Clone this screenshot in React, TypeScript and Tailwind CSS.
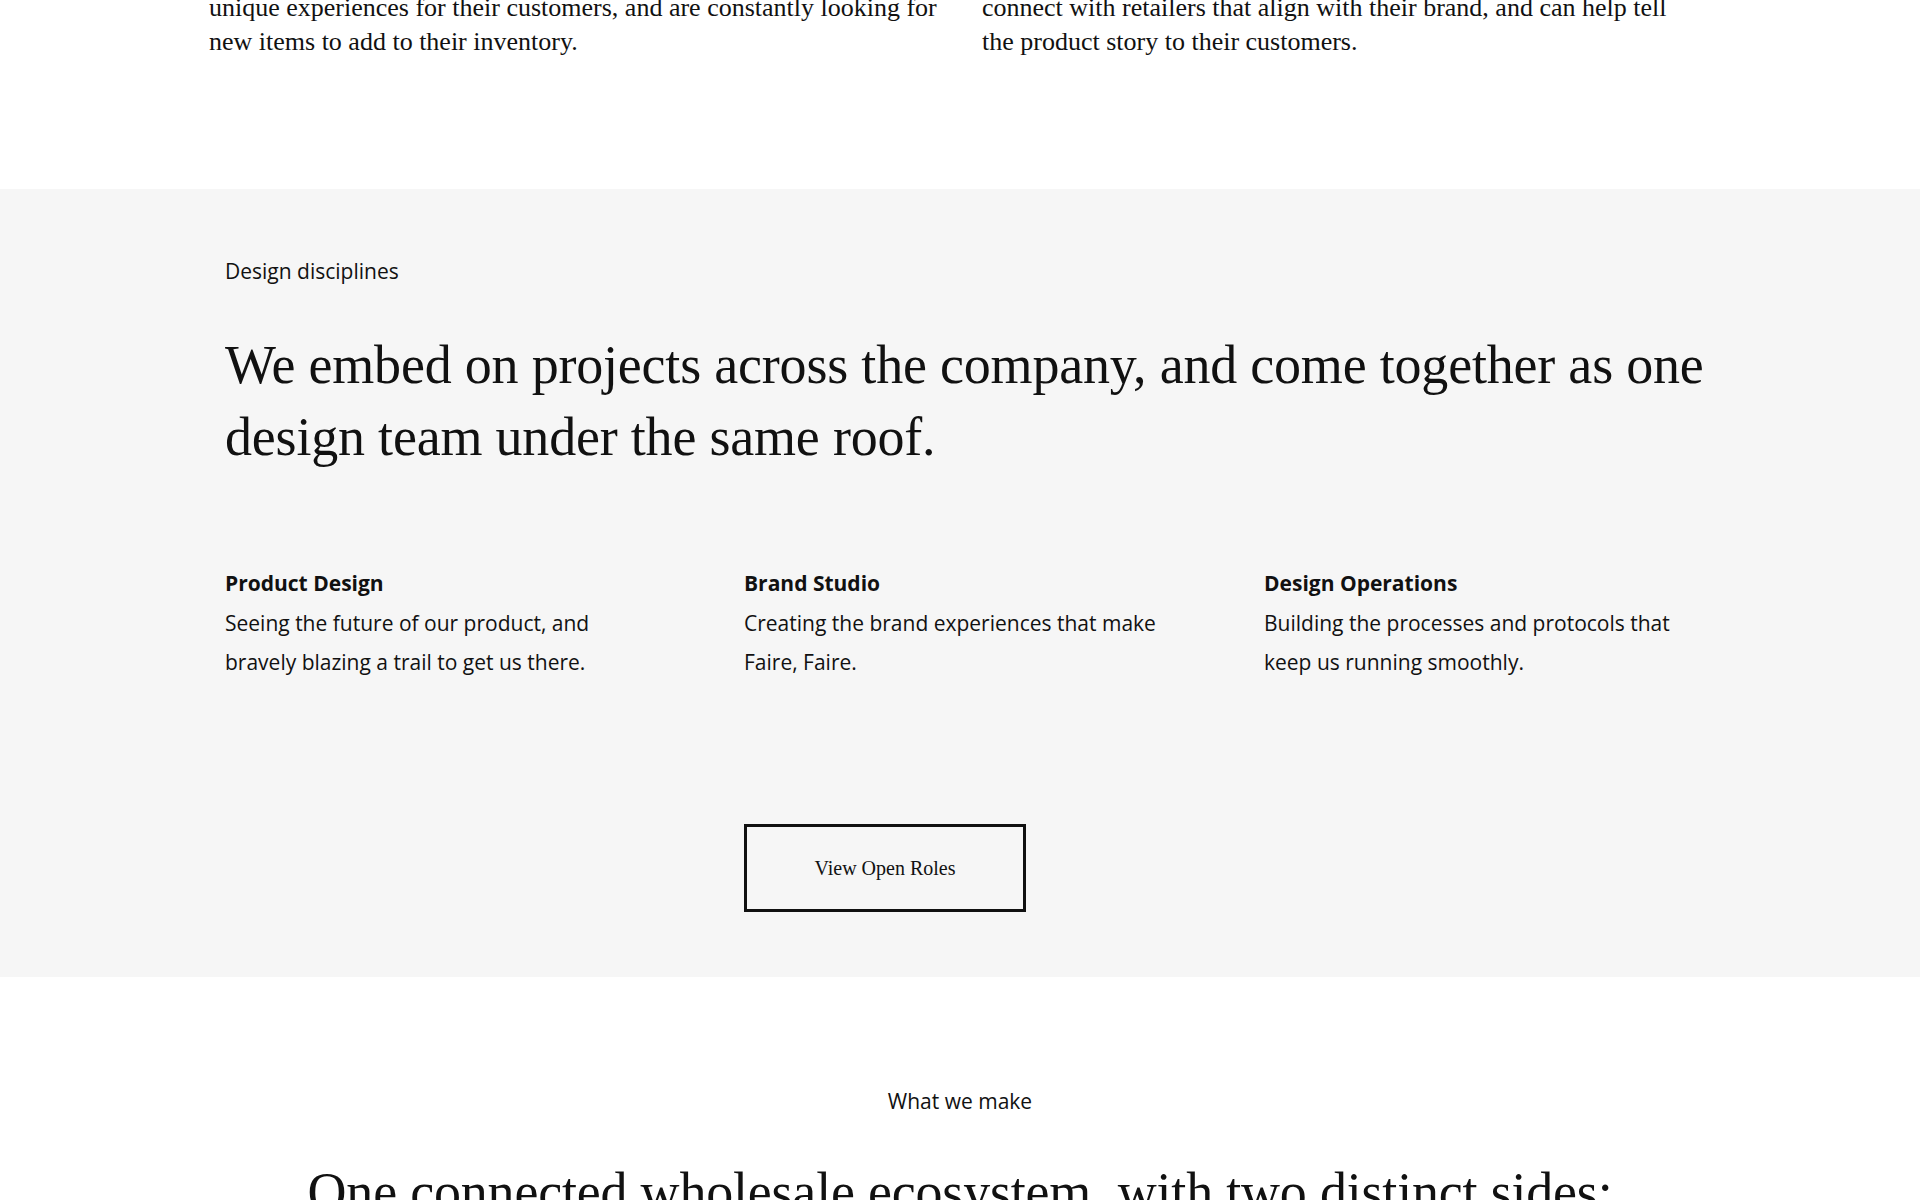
const serif = "font-['Liberation_Serif','Times_New_Roman',serif]";
const sans = "font-['Open_Sans','Liberation_Sans',sans-serif]";

const disciplines = [
  {
    title: "Product Design",
    body: "Seeing the future of our product, and bravely blazing a trail to get us there.",
  },
  {
    title: "Brand Studio",
    body: "Creating the brand experiences that make Faire, Faire.",
  },
  {
    title: "Design Operations",
    body: "Building the processes and protocols that keep us running smoothly.",
  },
];

function Intro() {
  return (
    <section className="bg-white">
      <div className={`mx-auto -mt-[9px] grid w-[1502px] grid-cols-2 gap-x-[44px] pb-[130px] text-[26px] leading-[34px] text-[#111] ${serif}`}>
        <p className="max-w-[740px]">
          unique experiences for their customers, and are constantly looking for
          <br />
          new items to add to their inventory.
        </p>
        <p className="max-w-[740px]">
          connect with retailers that align with their brand, and can help tell
          <br />
          the product story to their customers.
        </p>
      </div>
    </section>
  );
}

function Disciplines() {
  return (
    <section className="bg-[#f6f6f6]">
      <div className="mx-auto w-[1470px] pt-[69px] pb-[65px] text-[#111]">
        <p className={`text-[21px] leading-[27px] ${sans}`}>Design disciplines</p>
        <h2 className={`mt-[44px] w-[1510px] text-[54px] leading-[72px] tracking-[-0.2px] ${serif}`}>
          We embed on projects across the company, and come together as one
          design team under the same roof.
        </h2>
        <div className={`mt-[95px] grid grid-cols-[519px_520px_1fr] ${sans}`}>
          {disciplines.map((d) => (
            <div key={d.title}>
              <h3 className="text-[21px] leading-[30px] font-bold">{d.title}</h3>
              <p className="mt-[6px] max-w-[420px] text-[21px] leading-[39px]">{d.body}</p>
            </div>
          ))}
        </div>
        <div className="mt-[142px] pl-[519px]">
          <button
            className={`flex h-[88px] w-[282px] items-center justify-center border-[3px] border-[#111] text-[20px] text-[#111] ${serif}`}
          >
            View Open Roles
          </button>
        </div>
      </div>
    </section>
  );
}

function WhatWeMake() {
  return (
    <section className="bg-white pt-[111px] text-center text-[#111]">
      <p className={`text-[21px] leading-[27px] ${sans}`}>What we make</p>
      <h2 className={`mt-[41px] text-[54px] leading-[72px] tracking-[-0.2px] ${serif}`}>
        One connected wholesale ecosystem, with two distinct sides:
      </h2>
      <div className="h-[200px]" />
    </section>
  );
}

export default function App() {
  return (
    <div className="h-[1200px] overflow-hidden bg-white">
      <Intro />
      <Disciplines />
      <WhatWeMake />
    </div>
  );
}
